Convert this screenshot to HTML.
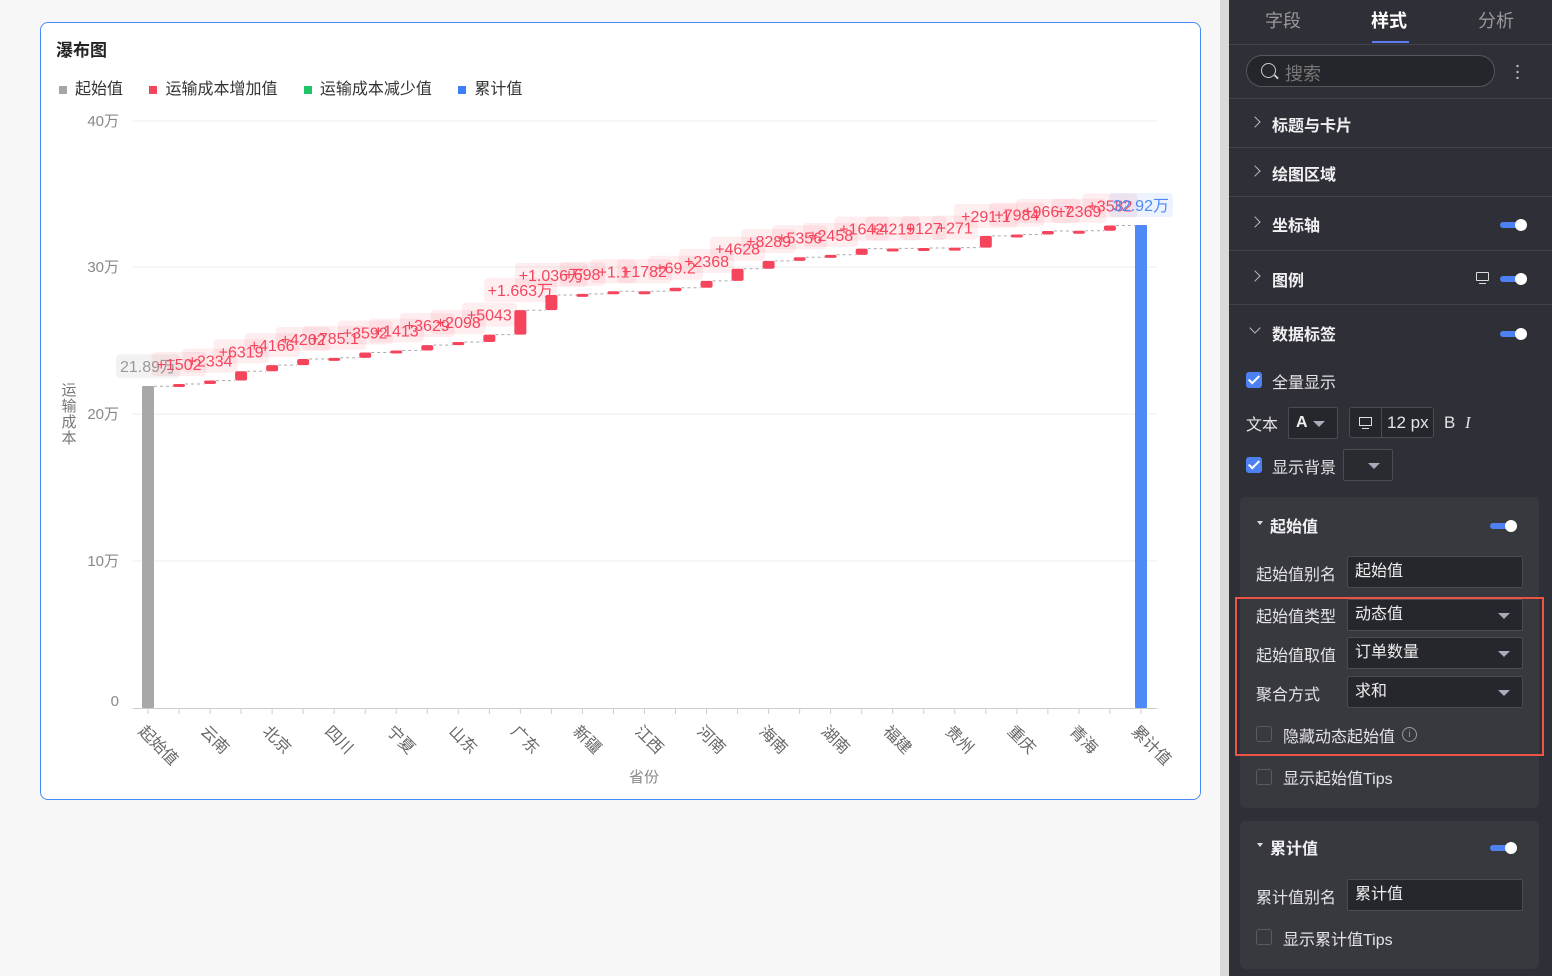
<!DOCTYPE html>
<html><head><meta charset="utf-8"><style>
*{margin:0;padding:0;box-sizing:border-box}
body{width:1552px;height:976px;background:#f7f7f7;font-family:"Liberation Sans","Noto Sans CJK SC",sans-serif;position:relative;overflow:hidden}
.card{position:absolute;left:40px;top:22px;width:1161px;height:778px;background:#fff;border:1px solid #4a8af4;border-radius:8px}
.sb{position:absolute;left:1220px;top:0;width:9px;height:976px;background:#d9d9d9}
.panel{position:absolute;left:1229px;top:0;width:323px;height:976px;background:#2f3037;color:#e8e8ea;font-size:16px}
.a{position:absolute}
.sep{position:absolute;left:0;width:323px;height:1px;background:#41424a}
.hd{position:absolute;left:43px;font-weight:bold;font-size:16px;color:#f0f0f2}
.chev{position:absolute;left:22px;width:8px;height:8px;border-right:1.5px solid #bbb;border-top:1.5px solid #bbb;transform:rotate(45deg)}
.tg{position:absolute;width:24px;height:6px;background:#4d80f0;border-radius:3px}
.tg:after{content:"";position:absolute;right:-3px;top:-3px;width:12px;height:12px;border-radius:50%;background:#fff}
.cb{position:absolute;width:16px;height:16px;border-radius:3px;background:#4d80f0}
.cb:after{content:"";position:absolute;left:5px;top:1px;width:4px;height:9px;border-right:2px solid #fff;border-bottom:2px solid #fff;transform:rotate(45deg)}
.cbo{position:absolute;width:16px;height:16px;border-radius:3px;border:1px solid #5a5b62}
.box{position:absolute;background:#38393f;border-radius:6px}
.inp{position:absolute;background:#26272c;border:1px solid #4b4c53;border-radius:2px;color:#eee;font-size:16px;padding-left:7px;line-height:30px}
.dd:after{content:"";position:absolute;right:12px;top:13px;border-left:6px solid transparent;border-right:6px solid transparent;border-top:6px solid #aab}
.lb{position:absolute;font-size:16px;color:#e4e4e6}
</style></head><body>
<div class="card">
<div class="a" style="left:15px;top:13px;font-size:17px;font-weight:bold;color:#222">瀑布图</div>
<div class="a" style="left:18px;top:52px;font-size:16px;color:#333;white-space:nowrap">
<span style="display:inline-block;width:8px;height:8px;background:#a6a6a6;margin-right:8px"></span>起始值
<span style="display:inline-block;width:8px;height:8px;background:#f5455c;margin:0 8px 0 22px"></span>运输成本增加值
<span style="display:inline-block;width:8px;height:8px;background:#22c266;margin:0 8px 0 22px"></span>运输成本减少值
<span style="display:inline-block;width:8px;height:8px;background:#3d7ff7;margin:0 8px 0 22px"></span>累计值</div>
</div>
<svg class="a" style="left:0;top:0" width="1210" height="976" font-family="Liberation Sans,Noto Sans CJK SC,sans-serif">
<g font-size="15" fill="#888" text-anchor="end">
<text x="119" y="126">40万</text><text x="119" y="272">30万</text><text x="119" y="419">20万</text><text x="119" y="566">10万</text><text x="119" y="706">0</text></g>
<g stroke="#eee" stroke-width="1"><line x1="133" y1="121" x2="1157" y2="121"/><line x1="133" y1="267" x2="1157" y2="267"/><line x1="133" y1="414" x2="1157" y2="414"/><line x1="133" y1="561" x2="1157" y2="561"/></g>
<line x1="133" y1="708.5" x2="1157" y2="708.5" stroke="#ccc"/>
<g stroke="#ccc" id="ticks"></g>
<g font-size="15" fill="#777" text-anchor="middle"><text x="69" y="395">运</text><text x="69" y="411">输</text><text x="69" y="427">成</text><text x="69" y="443">本</text></g>
<text x="644" y="782" font-size="15" fill="#888" text-anchor="middle">省份</text>
<rect x="142" y="386" width="12" height="322" fill="#a8a8a8" rx="1"/>
<rect x="1135" y="225" width="12" height="483" fill="#4e8af7" rx="1"/>
<g id="bars"></g>
<g id="lbls"></g>
<g id="xl" font-size="16" fill="#666"></g>
</svg>
<script>
var inc=[1502,2334,6319,4166,4202,785,3592,1413,3629,2098,5043,16630,10360,698,1782,69,2368,4628,8289,5356,2458,1642,4219,127,271,291,7984,966,2369,124,3582];
var lab=["+1502","+2334","+6319","+4166","+4202","+785.1","+3592","+1413","+3629","+2098","+5043","+1.663万","+1.036万","+698","+1.1","+1782","+69.2","+2368","+4628","+8289","+5356","+2458","+1642","+4219","+127","+271","+291.1","+7984","+966.7","+2369","+124.2","+3582"];
lab.splice(30,1);
var ns="http://www.w3.org/2000/svg",B=document.getElementById("bars"),L=document.getElementById("lbls"),T=document.getElementById("ticks"),X=document.getElementById("xl");
function el(t,a,p){var e=document.createElementNS(ns,t);for(var k in a)e.setAttribute(k,a[k]);p.appendChild(e);return e}
function cx(i){return 148+31.03*i}
var c=0,y0=386.2,d="";
function lbl(x,y,t,col,bg){var w=t.length*9+10;el("rect",{x:x-w/2,y:y-32,width:w,height:24,rx:4,fill:bg},L);var e=el("text",{x:x,y:y-14,"font-size":16,fill:col,"text-anchor":"middle"},L);e.textContent=t}
lbl(cx(0),y0,"21.89万","#999","rgba(0,0,0,0.05)");
for(var i=1;i<=31;i++){var py=386.2-c*0.00147;c+=inc[i-1];var ny=386.2-c*0.00147;var h=Math.max(py-ny,3);
d+="M"+(cx(i-1)+6)+" "+py.toFixed(1)+"H"+(cx(i)-6);
el("rect",{x:cx(i)-6,y:ny,width:12,height:h,rx:2,fill:"#f5455c"},B);
lbl(cx(i),ny,lab[i-1],"#f5455c","rgba(245,69,92,0.09)");}
d+="M"+(cx(31)+6)+" "+(386.2-c*0.00147).toFixed(1)+"H"+(cx(32)-6);
el("path",{d:d,stroke:"#aaa","stroke-dasharray":"3 3",fill:"none"},B);
lbl(cx(32),225,"32.92万","#4e8af7","rgba(78,138,247,0.1)");
for(var i=0;i<33;i++)el("line",{x1:cx(i),y1:709,x2:cx(i),y2:714},T);
var xs=["起始值","云南","北京","四川","宁夏","山东","广东","新疆","江西","河南","海南","湖南","福建","贵州","重庆","青海","累计值"];
xs.forEach(function(s,j){var x=cx(j*2)-6;var e=el("text",{x:x,y:734,transform:"rotate(45 "+x+" 728)"},X);e.textContent=s});
</script>
<div class="sb"></div>
<div class="panel">
<div class="a" style="left:36px;top:7px;font-size:18px;color:#999">字段</div>
<div class="a" style="left:142px;top:7px;font-size:18px;color:#fff;font-weight:bold">样式</div>
<div class="a" style="left:143px;top:41px;width:37px;height:2px;background:#5b7df5"></div>
<div class="a" style="left:249px;top:7px;font-size:18px;color:#999">分析</div>
<div class="sep" style="top:44px"></div>
<div class="a" style="left:17px;top:55px;width:249px;height:32px;border:1px solid #55565d;border-radius:16px;background:#25262b"></div>
<div class="a" style="left:32px;top:63px;width:15px;height:15px;border:1.5px solid #ccc;border-radius:50%"></div>
<div class="a" style="left:45px;top:76px;width:5px;height:1.5px;background:#ccc;transform:rotate(45deg)"></div>
<div class="a" style="left:56px;top:60px;font-size:18px;color:#777">搜索</div>
<div class="a" style="left:287px;top:63px;width:3px;height:16px;background:radial-gradient(circle,#bbb 1.2px,transparent 1.3px) 0 0/3px 6px"></div>
<div class="sep" style="top:98px"></div>
<div class="chev" style="top:118px"></div><div class="hd" style="top:112px">标题与卡片</div>
<div class="sep" style="top:147px"></div>
<div class="chev" style="top:167px"></div><div class="hd" style="top:161px">绘图区域</div>
<div class="sep" style="top:196px"></div>
<div class="chev" style="top:218px"></div><div class="hd" style="top:212px">坐标轴</div><div class="tg" style="left:271px;top:222px"></div>
<div class="sep" style="top:250px"></div>
<div class="chev" style="top:272px"></div><div class="hd" style="top:267px">图例</div>
<div class="a" style="left:247px;top:272px;width:13px;height:9px;border:1.3px solid #ddd;border-radius:1px"></div><div class="a" style="left:250px;top:283px;width:7px;height:1.3px;background:#ddd"></div>
<div class="tg" style="left:271px;top:276px"></div>
<div class="sep" style="top:304px"></div>
<div class="chev" style="top:324px;transform:rotate(135deg)"></div><div class="hd" style="top:321px">数据标签</div><div class="tg" style="left:271px;top:331px"></div>
<div class="cb" style="left:17px;top:372px"></div><div class="lb" style="left:43px;top:369px">全量显示</div>
<div class="lb" style="left:17px;top:411px">文本</div>
<div class="inp dd" style="left:59px;top:407px;width:50px;height:32px;font-weight:bold">A</div>
<div class="a" style="left:120px;top:407px;width:85px;height:31px;border:1px solid #4b4c53;border-radius:3px;background:#26272c"></div>
<div class="a" style="left:152px;top:408px;width:1px;height:29px;background:#4b4c53"></div>
<div class="a" style="left:130px;top:417px;width:13px;height:9px;border:1.3px solid #ddd"></div><div class="a" style="left:133px;top:428px;width:7px;height:1.3px;background:#ddd"></div>
<div class="lb" style="left:158px;top:413px;font-size:17px">12 px</div>
<div class="lb" style="left:215px;top:413px;font-size:17px">B</div><div class="lb" style="left:236px;top:413px;font-size:17px;font-style:italic;font-family:'Liberation Serif',serif">I</div>
<div class="cb" style="left:17px;top:457px"></div><div class="lb" style="left:43px;top:454px">显示背景</div>
<div class="inp dd" style="left:114px;top:449px;width:50px;height:32px;background:#2a2b30"></div>
<div class="box" style="left:11px;top:497px;width:299px;height:311px"></div>
<div class="a" style="left:28px;top:521px;border-left:3.5px solid transparent;border-right:3.5px solid transparent;border-top:4px solid #ddd"></div>
<div class="hd" style="left:41px;top:513px">起始值</div><div class="tg" style="left:261px;top:523px"></div>
<div class="lb" style="left:27px;top:561px">起始值别名</div><div class="inp" style="left:118px;top:556px;width:176px;height:32px">起始值</div>
<div class="lb" style="left:27px;top:603px">起始值类型</div><div class="inp dd" style="left:118px;top:599px;width:176px;height:32px">动态值</div>
<div class="lb" style="left:27px;top:642px">起始值取值</div><div class="inp dd" style="left:118px;top:637px;width:176px;height:32px">订单数量</div>
<div class="lb" style="left:27px;top:681px">聚合方式</div><div class="inp dd" style="left:118px;top:676px;width:176px;height:32px">求和</div>
<div class="cbo" style="left:27px;top:726px"></div><div class="lb" style="left:54px;top:723px">隐藏动态起始值</div>
<div class="a" style="left:173px;top:727px;width:15px;height:15px;border:1.3px solid #999;border-radius:50%;font-size:10px;color:#999;text-align:center;line-height:13px">i</div>
<div class="a" style="left:6px;top:597px;width:309px;height:159px;border:2.5px solid #ec5545"></div>
<div class="cbo" style="left:27px;top:769px"></div><div class="lb" style="left:54px;top:765px">显示起始值Tips</div>
<div class="box" style="left:11px;top:821px;width:299px;height:148px"></div>
<div class="a" style="left:28px;top:843px;border-left:3.5px solid transparent;border-right:3.5px solid transparent;border-top:4px solid #ddd"></div>
<div class="hd" style="left:41px;top:835px">累计值</div><div class="tg" style="left:261px;top:845px"></div>
<div class="lb" style="left:27px;top:884px">累计值别名</div><div class="inp" style="left:118px;top:879px;width:176px;height:32px">累计值</div>
<div class="cbo" style="left:27px;top:929px"></div><div class="lb" style="left:54px;top:926px">显示累计值Tips</div>
</div>
</body></html>
